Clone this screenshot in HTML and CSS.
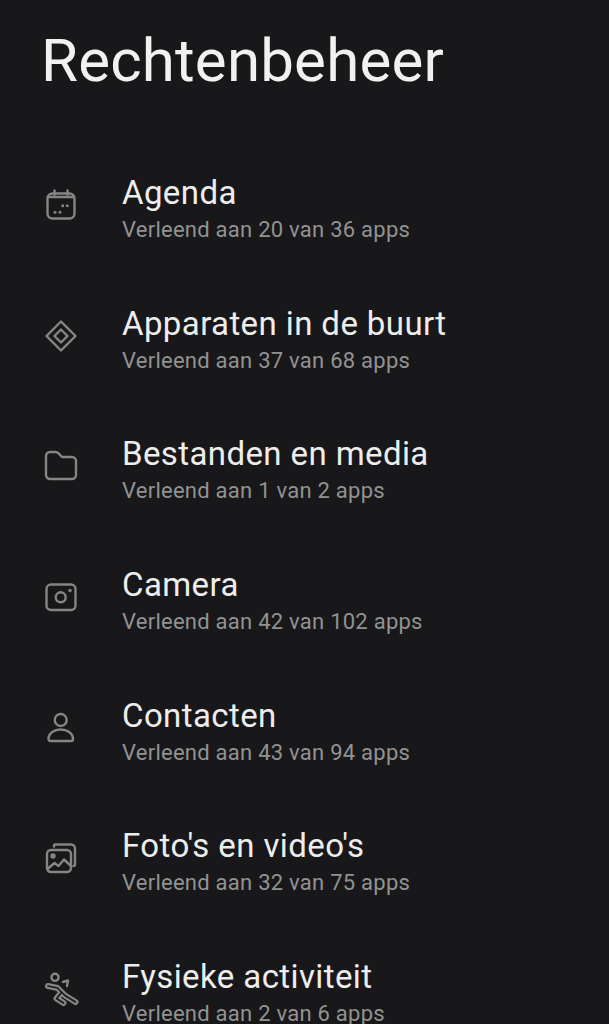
FILE: index.html
```html
<!DOCTYPE html>
<html lang="nl">
<head>
<meta charset="utf-8">
<title>Rechtenbeheer</title>
<link rel="stylesheet" href="styles.css">
</head>
<body>
<main class="screen">
<h1 class="title">Rechtenbeheer</h1>
<ul class="list">
<li class="row">
<svg class="icon" viewBox="0 0 32 32"><rect x="2.500" y="4.500" width="27" height="25" rx="5"/><path d="M9.500 1.500v4M22.500 1.500v4M3 8h26"/><g class="dots"><circle cx="17.700" cy="16.700" r="1.500"/><circle cx="22.300" cy="16.700" r="1.500"/><circle cx="10" cy="23.300" r="1.500"/><circle cx="15" cy="23.300" r="1.500"/></g></svg>
<div class="text"><div class="name">Agenda</div><div class="sub">Verleend aan 20 van 36 apps</div></div>
</li>
<li class="row">
<svg class="icon" viewBox="0 0 32 32"><path d="M16 1.500 30.500 16 16 30.500 1.500 16Z"/><path d="M16 9.500 22.500 16 16 22.500 9.500 16Z"/></svg>
<div class="text"><div class="name">Apparaten in de buurt</div><div class="sub">Verleend aan 37 van 68 apps</div></div>
</li>
<li class="row">
<svg class="icon" viewBox="0 0 32 32"><path d="M1 6a4 4 0 0 1 4-4h5.500a4 4 0 0 1 2.800 1.200L17 7h10a4 4 0 0 1 4 4v14a4 4 0 0 1-4 4H5a4 4 0 0 1-4-4Z"/></svg>
<div class="text"><div class="name">Bestanden en media</div><div class="sub">Verleend aan 1 van 2 apps</div></div>
</li>
<li class="row">
<svg class="icon" viewBox="0 0 32 32"><rect x="1.500" y="3.500" width="29" height="25.500" rx="4.500"/><circle cx="15.700" cy="16.300" r="5"/><circle class="solid" cx="25" cy="9.500" r="1.700"/></svg>
<div class="text"><div class="name">Camera</div><div class="sub">Verleend aan 42 van 102 apps</div></div>
</li>
<li class="row">
<svg class="icon" viewBox="0 0 32 32"><circle cx="15.700" cy="8" r="6"/><path d="M3.500 27c0-6 6-9.500 12.200-9.500S28 21 28 27a2 2 0 0 1-2 2H5.500a2 2 0 0 1-2-2Z"/></svg>
<div class="text"><div class="name">Contacten</div><div class="sub">Verleend aan 43 van 94 apps</div></div>
</li>
<li class="row">
<svg class="icon" viewBox="0 0 32 32"><path d="M9 4.500V3.500a1 1 0 0 1 1-1h16a4 4 0 0 1 4 4v16a1.500 1.500 0 0 1-1.500 1.500"/><rect x="2" y="8" width="24" height="22" rx="4"/><circle cx="8" cy="14" r="1.500"/><path d="M2.500 27l7-6 4 3 5.500-6.500 6.500 6"/></svg>
<div class="text"><div class="name">Foto's en video's</div><div class="sub">Verleend aan 32 van 75 apps</div></div>
</li>
<li class="row">
<svg class="icon" viewBox="0 0 32 32"><circle cx="10" cy="4.300" r="3.600"/><path class="limb-outer" d="M3 13 12.500 15 20 22.500 30.500 29M16.500 19.500 11.500 25.500 18.500 30"/><path class="limb-inner" d="M3 13 12.500 15 20 22.500 30.500 29M16.500 19.500 11.500 25.500 18.500 30"/><path d="M18 9l5-1.500-1 5.500"/></svg>
<div class="text"><div class="name">Fysieke activiteit</div><div class="sub">Verleend aan 2 van 6 apps</div></div>
</li>
</ul>
</main>
</body>
</html>
```
FILE: styles.css
```css
* { box-sizing: border-box; }
html, body { margin: 0; height: 100%; overflow: hidden; background: #18181a; }
.screen {
  height: 1024px;
  overflow: hidden;
  padding: 25px 0 0 41px;
  font-family: Roboto, "Noto Sans", sans-serif;
}
.title {
  margin: 0;
  font-size: 60px;
  line-height: 71px;
  font-weight: 400;
  color: #f1f1f1;
  letter-spacing: 0.2px;
  white-space: nowrap;
}
.list { list-style: none; margin: 47.500px 0 0; padding: 0; }
.row {
  display: flex;
  align-items: center;
  height: 130.700px;
}
.icon {
  width: 32px;
  height: 32px;
  margin: -8px 0 0 4px;
  flex: none;
  fill: none;
  overflow: visible;
  stroke: #858585;
  stroke-width: 2.400;
  stroke-linecap: round;
  stroke-linejoin: round;
}
.icon .solid, .icon .dots { fill: #858585; stroke: none; }
.icon .limb-outer { stroke-width: 6; }
.icon .limb-inner { stroke: #18181a; stroke-width: 1.600; }
.text { margin-left: 45px; }
.name {
  font-size: 33px;
  line-height: 38px;
  letter-spacing: 0.4px;
  color: #ededed;
  white-space: nowrap;
}
.sub {
  font-size: 22px;
  line-height: 28px;
  letter-spacing: 0.25px;
  margin-top: 4px;
  color: #929292;
  white-space: nowrap;
}
```
